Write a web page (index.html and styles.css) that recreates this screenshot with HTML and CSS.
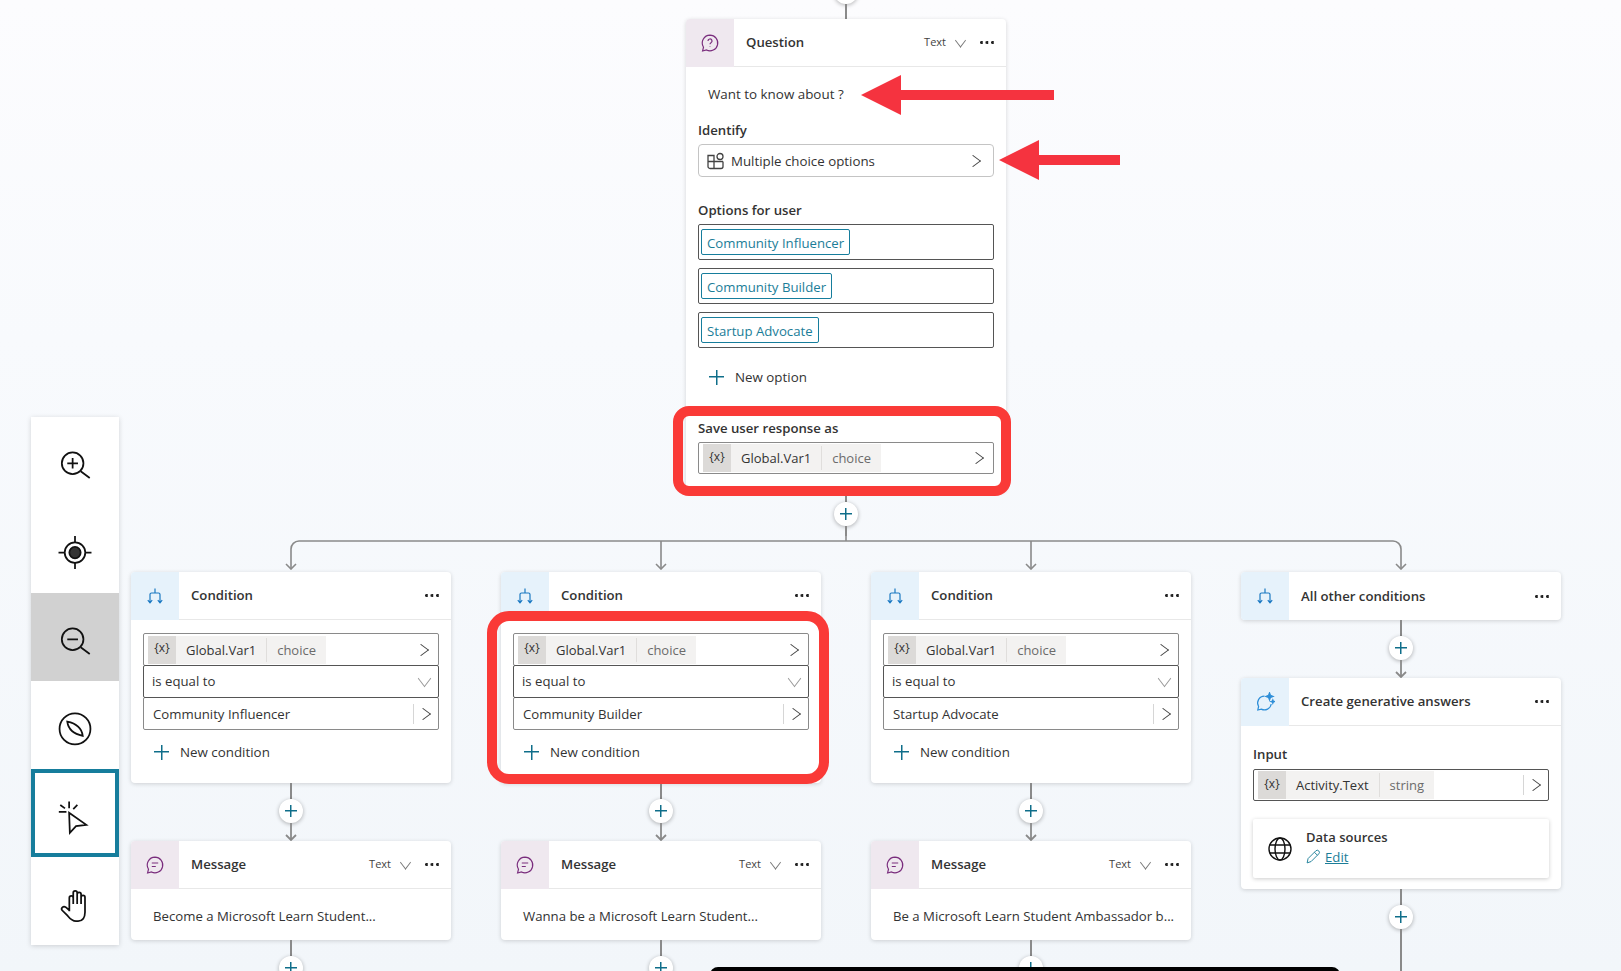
FILE: index.html
```html
<!DOCTYPE html>
<html lang="en">
<head>
    <meta charset="UTF-8">
    <meta name="viewport" content="width=device-width, initial-scale=1.0">
    <title>Topic authoring canvas</title>
    <link rel="stylesheet" href="styles.css">
</head>
<body>
    <svg class="sprites" aria-hidden="true">
        <symbol id="i-bubble-q" viewBox="0 0 20 20"><path d="M10 2.2a7.8 7.8 0 1 1-3.5 14.8L2.6 18l.9-3.8A7.8 7.8 0 0 1 10 2.2Z"/><path d="M8 8a2 2 0 1 1 3 1.7c-.7.4-1 .8-1 1.6M10 13.6v.4"/></symbol>
        <symbol id="i-bubble-m" viewBox="0 0 20 20"><path d="M10 2.2a7.8 7.8 0 1 1-3.5 14.8L2.6 18l.9-3.8A7.8 7.8 0 0 1 10 2.2Z"/><path d="M6.8 8h6.4M6.8 11.5h4"/></symbol>
        <symbol id="i-branch" viewBox="0 0 16 16"><path d="M8 .5V5M3 14.5V6.5A1.5 1.5 0 0 1 4.500 5h7A1.500 1.500 0 0 1 13 6.500v8M.8 12.200 3 14.800l2.200-2.600M10.800 12.200l2.200 2.600 2.200-2.600"/></symbol>
        <symbol id="i-spark" viewBox="0 0 20 20"><path d="M9.500 4.200A6.800 6.800 0 0 0 3.600 14.500L2.800 18l3.500-.9A6.800 6.800 0 0 0 16.200 12"/><path class="solid" d="m14.500.8 1 2.600 2.600 1-2.600 1-1 2.600-1-2.600-2.600-1 2.600-1ZM17.800 7.800l.5 1.300 1.300.5-1.300.5-.5 1.300-.5-1.300-1.300-.5 1.300-.5Z"/></symbol>
        <symbol id="i-options" viewBox="0 0 18 18"><path d="M1 3.500h6v13H3a2 2 0 0 1-2-2ZM1 9.500h15M7 16.500h7a2 2 0 0 0 2-2v-5M7 3.500v6"/><circle cx="13" cy="4.500" r="3"/></symbol>
        <symbol id="i-globe" viewBox="0 0 24 24"><circle cx="12" cy="12" r="11"/><ellipse cx="12" cy="12" rx="5" ry="11"/><path d="M1.600 8h20.800M1.600 16h20.800"/></symbol>
        <symbol id="i-pencil" viewBox="0 0 16 16"><path d="M1.200 14.800l1-4.600 8.200-8.200a2.200 2.200 0 0 1 3.200 3.200l-8.200 8.200ZM9 3.500l3.200 3.200"/></symbol>
        <symbol id="i-zoom-in" viewBox="-23.300 -23.300 46.600 46.600"><circle cx="-2.300" cy="2.200" r="10.500"/><path d="M5.500 10l8.800 6.500M-2.300-3v10.400M-7.500 2.200h10.400"/></symbol>
        <symbol id="i-zoom-out" viewBox="-23.300 -23.300 46.600 46.600"><circle cx="-2.300" cy="2.200" r="10.500"/><path d="M5.500 10l8.800 6.500M-7.500 2.200h10.400"/></symbol>
        <symbol id="i-target" viewBox="-23.300 -23.300 46.600 46.600"><circle cy="3.500" r="10"/><circle class="solid" cy="3.500" r="5.500"/><path d="M0-12.500v6M0 13.500v6M-16 3.500h6M10 3.500h6"/></symbol>
        <symbol id="i-compass" viewBox="-23.300 -23.300 46.600 46.600"><circle cy="3.800" r="15"/><path d="M-7.500-3.200Q6-.5 7.500 10.500-6 8-7.500-3.200Z"/></symbol>
        <symbol id="i-cursor" viewBox="-23.300 -23.300 46.600 46.600"><path d="M-5.700-.2 11 11.500 1 12.800-5 19.200ZM-5.700-11.200v6.700M-15.700-1.200h7.400M-14.300-7.800l4.600 3.300M2.300-7.800l-4 4"/></symbol>
        <symbol id="i-hand" viewBox="-23.300 -23.300 46.600 46.600"><path d="M-5.500 10V-3a1.900 1.900 0 0 1 3.800 0V3M-1.700-3v-5a1.900 1.900 0 0 1 3.800 0V3M2.100-6.500a1.900 1.900 0 0 1 3.800 0V3M5.900-3.500a1.900 1.900 0 0 1 3.800 0V11C9.700 16 7.500 19.500 3 19.500H1C-3 19.500-5 17-7 14.500L-12.500 9C-14 7-11.500 4.500-9 6L-5.500 9"/></symbol>
    </svg>

    <main class="canvas">
        <svg class="branches" width="1132" height="36" viewBox="0 0 1132 36">
            <path d="M11 35V15a8 8 0 0 1 8-8h1094a8 8 0 0 1 8 8v20M381 35V7M751 35V7M566 7V0"/>
            <path d="M6 30l5 5 5-5M376 30l5 5 5-5M746 30l5 5 5-5M1116 30l5 5 5-5"/>
        </svg>

        <section class="flow flow-top">
            <button class="add"><span class="add-plus"></span></button>
            <div class="stem stem-top"></div>
            <div class="card">
                <header class="card-head">
                    <span class="head-icon purple"><svg class="icon-head"><use href="#i-bubble-q"/></svg></span>
                    <span class="card-title">Question</span>
                    <span class="head-type">Text</span>
                    <span class="chev-down"></span>
                    <span class="dots"></span>
                </header>
                <div class="card-body question-body">
                    <p class="prompt">Want to know about ?</p>
                    <label class="field-label label-identify">Identify</label>
                    <div class="field field-light field-identify">
                        <svg class="icon-options"><use href="#i-options"/></svg>
                        <span class="field-text">Multiple choice options</span>
                        <span class="chev-right"></span>
                    </div>
                    <label class="field-label label-options">Options for user</label>
                    <div class="option-list">
                        <div class="option"><span class="tag">Community Influencer</span></div>
                        <div class="option"><span class="tag">Community Builder</span></div>
                        <div class="option"><span class="tag">Startup Advocate</span></div>
                    </div>
                    <div class="new-row new-option"><span class="plus"></span>New option</div>
                    <label class="field-label label-save">Save user response as</label>
                    <div class="field field-var">
                        <span class="chip"><span class="chip-icon">{x}</span><span class="chip-name">Global.Var1</span><span class="chip-type">choice</span></span>
                        <span class="chev-right"></span>
                    </div>
                </div>
            </div>
            <div class="stem stem-short"></div>
            <button class="add"><span class="add-plus"></span></button>
            <div class="stem stem-join"></div>
        </section>

        <section class="flow flow-a">
            <div class="card">
                <header class="card-head">
                    <span class="head-icon blue"><svg class="icon-branch"><use href="#i-branch"/></svg></span>
                    <span class="card-title">Condition</span>
                    <span class="dots"></span>
                </header>
                <div class="card-body condition-body">
                    <div class="field field-var field-stack">
                        <span class="chip"><span class="chip-icon">{x}</span><span class="chip-name">Global.Var1</span><span class="chip-type">choice</span></span>
                        <span class="chev-right"></span>
                    </div>
                    <div class="field field-stack field-dark">
                        <span class="field-op">is equal to</span>
                        <span class="chev-down chev-wide"></span>
                    </div>
                    <div class="field field-stack">
                        <span class="field-value">Community Influencer</span>
                        <span class="field-sep"></span>
                        <span class="chev-right"></span>
                    </div>
                    <div class="new-row new-condition"><span class="plus"></span>New condition</div>
                </div>
            </div>
            <div class="stem stem-mid"></div>
            <button class="add"><span class="add-plus"></span></button>
            <svg class="stem-arrow" width="12" height="18" viewBox="0 0 12 18"><path d="M6 0v17M1 12l5 5 5-5"/></svg>
            <div class="card">
                <header class="card-head">
                    <span class="head-icon purple"><svg class="icon-head"><use href="#i-bubble-m"/></svg></span>
                    <span class="card-title">Message</span>
                    <span class="head-type">Text</span>
                    <span class="chev-down"></span>
                    <span class="dots"></span>
                </header>
                <div class="card-body message-body">Become a Microsoft Learn Student...</div>
            </div>
            <div class="stem stem-mid"></div>
            <button class="add"><span class="add-plus"></span></button>
        </section>

        <section class="flow flow-b">
            <div class="card">
                <header class="card-head">
                    <span class="head-icon blue"><svg class="icon-branch"><use href="#i-branch"/></svg></span>
                    <span class="card-title">Condition</span>
                    <span class="dots"></span>
                </header>
                <div class="card-body condition-body">
                    <div class="field field-var field-stack">
                        <span class="chip"><span class="chip-icon">{x}</span><span class="chip-name">Global.Var1</span><span class="chip-type">choice</span></span>
                        <span class="chev-right"></span>
                    </div>
                    <div class="field field-stack field-dark">
                        <span class="field-op">is equal to</span>
                        <span class="chev-down chev-wide"></span>
                    </div>
                    <div class="field field-stack">
                        <span class="field-value">Community Builder</span>
                        <span class="field-sep"></span>
                        <span class="chev-right"></span>
                    </div>
                    <div class="new-row new-condition"><span class="plus"></span>New condition</div>
                </div>
            </div>
            <div class="stem stem-mid"></div>
            <button class="add"><span class="add-plus"></span></button>
            <svg class="stem-arrow" width="12" height="18" viewBox="0 0 12 18"><path d="M6 0v17M1 12l5 5 5-5"/></svg>
            <div class="card">
                <header class="card-head">
                    <span class="head-icon purple"><svg class="icon-head"><use href="#i-bubble-m"/></svg></span>
                    <span class="card-title">Message</span>
                    <span class="head-type">Text</span>
                    <span class="chev-down"></span>
                    <span class="dots"></span>
                </header>
                <div class="card-body message-body">Wanna be a Microsoft Learn Student...</div>
            </div>
            <div class="stem stem-mid"></div>
            <button class="add"><span class="add-plus"></span></button>
        </section>

        <section class="flow flow-c">
            <div class="card">
                <header class="card-head">
                    <span class="head-icon blue"><svg class="icon-branch"><use href="#i-branch"/></svg></span>
                    <span class="card-title">Condition</span>
                    <span class="dots"></span>
                </header>
                <div class="card-body condition-body">
                    <div class="field field-var field-stack">
                        <span class="chip"><span class="chip-icon">{x}</span><span class="chip-name">Global.Var1</span><span class="chip-type">choice</span></span>
                        <span class="chev-right"></span>
                    </div>
                    <div class="field field-stack field-dark">
                        <span class="field-op">is equal to</span>
                        <span class="chev-down chev-wide"></span>
                    </div>
                    <div class="field field-stack">
                        <span class="field-value">Startup Advocate</span>
                        <span class="field-sep"></span>
                        <span class="chev-right"></span>
                    </div>
                    <div class="new-row new-condition"><span class="plus"></span>New condition</div>
                </div>
            </div>
            <div class="stem stem-mid"></div>
            <button class="add"><span class="add-plus"></span></button>
            <svg class="stem-arrow" width="12" height="18" viewBox="0 0 12 18"><path d="M6 0v17M1 12l5 5 5-5"/></svg>
            <div class="card">
                <header class="card-head">
                    <span class="head-icon purple"><svg class="icon-head"><use href="#i-bubble-m"/></svg></span>
                    <span class="card-title">Message</span>
                    <span class="head-type">Text</span>
                    <span class="chev-down"></span>
                    <span class="dots"></span>
                </header>
                <div class="card-body message-body">Be a Microsoft Learn Student Ambassador b...</div>
            </div>
            <div class="stem stem-mid"></div>
            <button class="add"><span class="add-plus"></span></button>
        </section>

        <section class="flow flow-d">
            <div class="card">
                <header class="card-head card-head-solo">
                    <span class="head-icon blue"><svg class="icon-branch"><use href="#i-branch"/></svg></span>
                    <span class="card-title">All other conditions</span>
                    <span class="dots"></span>
                </header>
            </div>
            <div class="stem stem-mid"></div>
            <button class="add"><span class="add-plus"></span></button>
            <svg class="stem-arrow" width="12" height="18" viewBox="0 0 12 18"><path d="M6 0v17M1 12l5 5 5-5"/></svg>
            <div class="card">
                <header class="card-head">
                    <span class="head-icon blue"><svg class="icon-spark"><use href="#i-spark"/></svg></span>
                    <span class="card-title">Create generative answers</span>
                    <span class="dots"></span>
                </header>
                <div class="card-body answers-body">
                    <label class="field-label">Input</label>
                    <div class="field field-var field-dark field-input">
                        <span class="chip"><span class="chip-icon">{x}</span><span class="chip-name">Activity.Text</span><span class="chip-type">string</span></span>
                        <span class="field-sep"></span>
                        <span class="chev-right"></span>
                    </div>
                    <div class="sources">
                        <svg class="icon-globe"><use href="#i-globe"/></svg>
                        <div class="sources-text">
                            <div class="sources-title">Data sources</div>
                            <a class="sources-edit"><svg class="icon-pencil"><use href="#i-pencil"/></svg><span class="edit-link">Edit</span></a>
                        </div>
                    </div>
                </div>
            </div>
            <div class="stem stem-mid"></div>
            <button class="add"><span class="add-plus"></span></button>
            <div class="stem stem-long"></div>
        </section>

        <nav class="toolbar">
            <div class="tool"><svg class="icon-tool"><use href="#i-zoom-in"/></svg></div>
            <div class="tool"><svg class="icon-tool"><use href="#i-target"/></svg></div>
            <div class="tool tool-hover"><svg class="icon-tool"><use href="#i-zoom-out"/></svg></div>
            <div class="tool"><svg class="icon-tool"><use href="#i-compass"/></svg></div>
            <div class="tool tool-active"><svg class="icon-tool"><use href="#i-cursor"/></svg></div>
            <div class="tool"><svg class="icon-tool"><use href="#i-hand"/></svg></div>
        </nav>

        <div class="mark mark-save"></div>
        <div class="mark mark-condition"></div>
        <svg class="pointer pointer-prompt" width="193" height="40" viewBox="0 0 193 40"><path d="M0 20 40 0v15h153v10H40v15Z"/></svg>
        <svg class="pointer pointer-identify" width="121" height="40" viewBox="0 0 121 40"><path d="M0 20 40 0v15h81v10H40v15Z"/></svg>
        <div class="black-bar"></div>
    </main>
</body>
</html>
```

FILE: styles.css
```css
* {
    box-sizing: border-box;
}

body {
    margin: 0;
    font-family: "Open Sans", "Noto Sans", sans-serif;
    font-size: 13.2px;
    line-height: 20px;
    color: #333333;
    overflow: hidden;
}

.sprites {
    display: none;
}

.canvas {
    position: relative;
    width: 1621px;
    height: 971px;
    overflow: hidden;
    background: linear-gradient(180deg, #fcfcfe 0%, #f8fafd 35%, #f2f6fa 100%);
}

/* flow columns, each one is a node group placed on the canvas */
.flow {
    position: absolute;
    width: 320px;
    display: flex;
    flex-direction: column;
    align-items: center;
}

.flow-top { left: 686px; top: -20px; }
.flow-a { left: 131px; top: 572px; }
.flow-b { left: 501px; top: 572px; }
.flow-c { left: 871px; top: 572px; }
.flow-d { left: 1241px; top: 572px; }

.branches {
    position: absolute;
    left: 280px;
    top: 534px;
    fill: none;
    stroke: #8a8a8a;
    stroke-width: 1.6;
}

.stem {
    width: 2px;
    background: #8a8a8a;
    flex: none;
}

.stem-top { height: 15px; }
.stem-short { height: 11px; }
.stem-join { height: 10px; }
.stem-mid { height: 16px; }
.stem-long { height: 60px; }

.stem-arrow {
    flex: none;
    fill: none;
    stroke: #8a8a8a;
    stroke-width: 1.8;
}

.add {
    width: 24px;
    height: 24px;
    flex: none;
    padding: 0;
    border: none;
    border-radius: 50%;
    background: #ffffff;
    box-shadow: 0 1px 4px rgba(0, 0, 0, 0.3);
    display: flex;
    justify-content: center;
    align-items: center;
}

.add-plus,
.plus {
    position: relative;
    display: block;
    width: 12px;
    height: 12px;
    flex: none;
    background:
        linear-gradient(#0f6e8a, #0f6e8a) center / 100% 1.5px no-repeat,
        linear-gradient(#0f6e8a, #0f6e8a) center / 1.5px 100% no-repeat;
}

/* cards */
.card {
    width: 320px;
    flex: none;
    background: #ffffff;
    border-radius: 4px;
    box-shadow: 0 1px 4px rgba(0, 0, 0, 0.16);
    overflow: hidden;
}

.card-head {
    height: 48px;
    display: flex;
    align-items: center;
    border-bottom: 1px solid #e8e8e8;
}

.card-head-solo {
    border-bottom: none;
}

.head-icon {
    width: 48px;
    height: 48px;
    flex: none;
    display: flex;
    justify-content: center;
    align-items: center;
}

.purple {
    background: #efe8ef;
    color: #7a2d7d;
}

.blue {
    background: #e6f2fb;
    color: #2f8fd8;
}

.icon-head {
    width: 20px;
    height: 20px;
    fill: none;
    stroke: #7a2d7d;
    stroke-width: 1.2;
}

.icon-branch {
    width: 16px;
    height: 16px;
    fill: none;
    stroke: #1a78c2;
    stroke-width: 1.2;
}

.icon-spark {
    width: 20px;
    height: 20px;
    fill: none;
    stroke: #2f8fd8;
    stroke-width: 1.2;
}

.solid {
    fill: currentColor;
}

.card-title {
    margin-left: 12px;
    padding-bottom: 1px;
    font-weight: 600;
    white-space: nowrap;
}

.head-type {
    margin-left: auto;
    font-size: 11px;
    color: #424242;
    margin-top: -2px;
}

.chev-down {
    width: 9px;
    height: 9px;
    margin: -5px 15px 0 10px;
    border-right: 1px solid #777;
    border-bottom: 1px solid #777;
    transform: rotate(45deg) skew(8deg, 8deg);
}

.dots {
    width: 14px;
    height: 3px;
    margin-left: auto;
    margin-right: 12px;
    flex: none;
    background: radial-gradient(circle at 1.5px 1.5px, #222 1.4px, transparent 1.5px) 0 0 / 5.5px 3px repeat-x;
}

.head-type + .chev-down + .dots {
    margin-left: 0;
}

.card-body {
    padding: 0 12px;
}

.field-label {
    display: block;
    font-weight: 600;
    white-space: nowrap;
}

.field {
    height: 33px;
    padding: 0 12px 0 4px;
    display: flex;
    align-items: center;
    background: #ffffff;
    border: 1px solid #8a8a8a;
    border-radius: 2px;
    white-space: nowrap;
}

.field-dark {
    border-color: #555555;
    position: relative;
}

.chev-right {
    width: 10px;
    height: 10px;
    margin-left: auto;
    flex: none;
    border-top: 1px solid #444;
    border-right: 1px solid #444;
    transform: rotate(45deg) skew(-8deg, -8deg);
}

.field-sep {
    width: 1px;
    height: 20px;
    margin-left: auto;
    background: #d6d6d6;
    flex: none;
}

.field-sep + .chev-right {
    margin-left: 4px;
    margin-right: -2px;
}

/* variable chip */
.chip {
    height: 28px;
    display: flex;
    align-items: center;
    background: #f3f2f1;
}

.chip-icon {
    width: 28px;
    height: 28px;
    display: flex;
    justify-content: center;
    align-items: center;
    background: #dcdad8;
    font-size: 12px;
    color: #333;
    padding-bottom: 3px;
}

.chip-name {
    padding: 0 10px;
    border-right: 1px solid #e0dedc;
    line-height: 24px;
    font-size: 13px;
}

.chip-type {
    padding: 0 10px;
    font-size: 13px;
    color: #6b6b6b;
}

/* question node */
.prompt {
    margin: 17px 0 0 10px;
    font-size: 13.4px;
}

.label-identify {
    margin-top: 16px;
}

.field-identify {
    margin-top: 4px;
    padding: 0 15px 0 8px;
    border-color: #c4c4c4;
    border-radius: 4px;
}

.icon-options {
    width: 18px;
    height: 18px;
    flex: none;
    fill: none;
    stroke: #424242;
    stroke-width: 1.3;
}

.field-text {
    margin-left: 6px;
    font-size: 13.3px;
}

.label-options {
    margin-top: 23px;
}

.option-list {
    margin-top: 4px;
    display: flex;
    flex-direction: column;
    gap: 8px;
}

.option {
    height: 36px;
    padding: 4px 2px;
    border: 1px solid #555555;
    border-radius: 2px;
}

.tag {
    display: inline-block;
    height: 26px;
    padding: 0 5px;
    border: 1px solid #167d9c;
    border-radius: 2px;
    color: #1b7d98;
    line-height: 26px;
    vertical-align: top;
}

.new-row {
    display: flex;
    align-items: center;
    white-space: nowrap;
    font-size: 13.35px;
}

.plus {
    width: 15px;
    height: 15px;
}

.new-option {
    margin: 19px 0 0 11px;
    gap: 11px;
}

.label-save {
    margin-top: 31px;
}

.question-body .field-var {
    margin: 4px 0 17px;
    height: 32px;
}

/* condition node */
.condition-body {
    padding-top: 13px;
    padding-bottom: 21px;
}

.field-stack {
    margin-bottom: -1px;
}

.field-op {
    margin: -2px 0 0 4px;
}

.field-value {
    margin-left: 5px;
}

.chev-wide {
    width: 11px;
    height: 11px;
    margin: -6px -4px 0 auto;
    border-color: #999;
}

.new-condition {
    margin: 13px 0 0 11px;
    gap: 11px;
}

.message-body {
    padding: 17px 22px 14px;
    white-space: nowrap;
}

/* generative answers node */
.answers-body {
    padding-top: 18px;
    padding-bottom: 11px;
}

.field-input {
    margin-top: 5px;
    height: 32px;
}

.sources {
    height: 59px;
    margin-top: 18px;
    padding-left: 15px;
    display: flex;
    align-items: center;
    gap: 14px;
    background: #ffffff;
    box-shadow: 0 1px 4px rgba(0, 0, 0, 0.2);
    border-radius: 2px;
}

.icon-globe {
    width: 24px;
    height: 24px;
    flex: none;
    fill: none;
    stroke: #111111;
    stroke-width: 1.4;
}

.sources-text {
    padding-bottom: 4px;
}

.sources-title {
    font-weight: 600;
    font-size: 13px;
}

.sources-edit {
    display: flex;
    align-items: center;
    gap: 4px;
}

.icon-pencil {
    width: 15px;
    height: 15px;
    fill: none;
    stroke: #1b7d98;
    stroke-width: 1;
}

.edit-link {
    color: #1b7d98;
    text-decoration: underline;
}

/* left toolbar */
.toolbar {
    position: absolute;
    left: 31px;
    top: 417px;
    width: 88px;
    background: #ffffff;
    box-shadow: 0 1px 5px rgba(0, 0, 0, 0.16);
    display: flex;
    flex-direction: column;
}

.tool {
    height: 88px;
    display: flex;
    justify-content: center;
    align-items: center;
}

.tool-hover {
    background: #d1d1d1;
}

.tool-active {
    border: 4px solid #167d9c;
}

.icon-tool {
    width: 48px;
    height: 48px;
    overflow: visible;
    fill: none;
    stroke: #111111;
    stroke-width: 1.7;
}

/* annotations drawn over the screenshot */
.mark {
    position: absolute;
    border: 10px solid #fa3a37;
}

.mark-save {
    left: 673px;
    top: 406px;
    width: 338px;
    height: 90px;
    border-radius: 16px;
}

.mark-condition {
    left: 487px;
    top: 611px;
    width: 342px;
    height: 173px;
    border-radius: 22px;
}

.pointer {
    position: absolute;
    fill: #f5333f;
}

.pointer-prompt {
    left: 861px;
    top: 75px;
}

.pointer-identify {
    left: 999px;
    top: 140px;
}

.black-bar {
    position: absolute;
    left: 710px;
    top: 967px;
    width: 630px;
    height: 10px;
    background: #000000;
    border-radius: 8px 8px 0 0;
}
```
